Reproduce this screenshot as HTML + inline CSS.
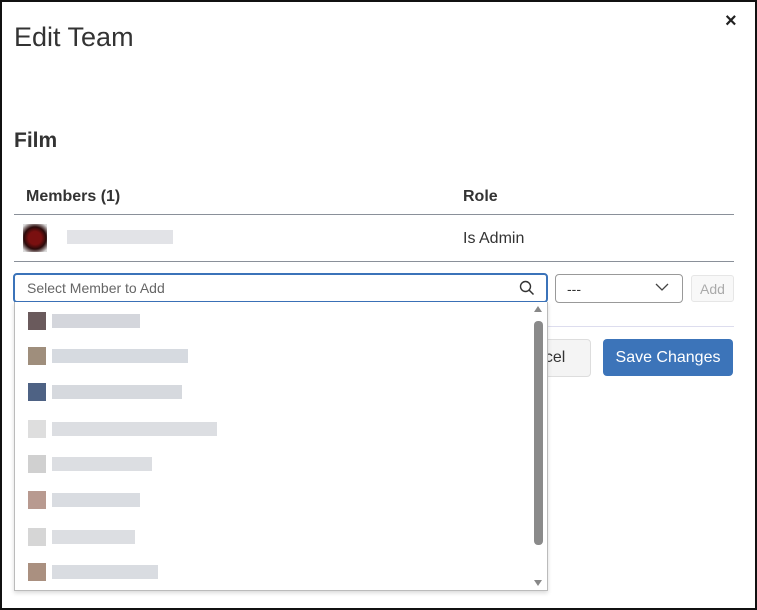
<!DOCTYPE html>
<html><head><style>
body{margin:0;width:757px;height:610px;overflow:hidden;background:#fff;font-family:"Liberation Sans",sans-serif;color:#222;position:relative}
.frame{position:absolute;left:0;top:0;width:753px;height:606px;border:2px solid #111}
.a{position:absolute}
.blk{position:absolute;height:14px}
.av{position:absolute;width:18px;height:18px}
</style></head><body>
<div class="frame"></div>
<div class="a" style="left:14px;top:22px;font-size:27px;color:#333">Edit Team</div>
<div class="a" style="left:725px;top:10px;font-size:20px;font-weight:bold;color:#222">×</div>
<div class="a" style="left:14px;top:129px;font-size:21px;font-weight:bold;color:#333">Film</div>
<div class="a" style="left:26px;top:188px;font-size:16px;font-weight:bold;color:#333">Members (1)</div>
<div class="a" style="left:463px;top:188px;font-size:16px;font-weight:bold;color:#333">Role</div>
<div class="a" style="left:14px;top:214px;width:720px;height:1px;background:#8a9099"></div>
<div class="a" style="left:23px;top:224px;width:24px;height:28px;background:radial-gradient(circle,#7a1010 35%,#2a0a0a 60%,#ddd 90%)"></div>
<div class="blk" style="left:67px;top:230px;width:106px;background:#e2e3e7"></div>
<div class="a" style="left:463px;top:230px;font-size:16px;color:#333">Is Admin</div>
<div class="a" style="left:14px;top:261px;width:720px;height:1px;background:#8a9099"></div>
<div class="a" style="left:14px;top:326px;width:720px;height:1px;background:#dde"></div>
<div class="a" style="left:13px;top:273px;width:531px;height:26px;border:2px solid #3b73b9;border-radius:4px;background:#fff"></div>
<div class="a" style="left:27px;top:280px;font-size:14px;color:#666">Select Member to Add</div>
<svg class="a" style="left:518px;top:279px" width="18" height="18" viewBox="0 0 18 18"><circle cx="7.5" cy="7.5" r="5" fill="none" stroke="#333" stroke-width="1.4"/><path d="M11 11l4.5 4.5" stroke="#333" stroke-width="1.5"/></svg>
<div class="a" style="left:555px;top:274px;width:126px;height:27px;border:1px solid #999;border-radius:4px"></div>
<div class="a" style="left:567px;top:281px;font-size:14px;color:#333">---</div>
<svg class="a" style="left:655px;top:282px" width="14" height="10"><path d="M1 2l6 6 6-6" fill="none" stroke="#444" stroke-width="1.3"/></svg>
<div class="a" style="left:691px;top:275px;width:41px;height:25px;border:1px solid #e6e6e6;border-radius:3px;background:#f8f8f8;color:#aaa;font-size:14px;line-height:26px;text-align:center">Add</div>
<div class="a" style="left:530px;top:339px;width:59px;height:36px;border:1px solid #ddd;border-radius:4px;background:#f4f4f4"></div>
<div class="a" style="left:536px;top:349px;font-size:16px;color:#333">ncel</div>
<div class="a" style="left:603px;top:339px;width:130px;height:37px;border-radius:4px;background:#3c74b9;color:#fff;font-size:16px;line-height:38px;text-align:center">Save Changes</div>
<div class="a" style="left:14px;top:302px;width:532px;height:288px;border:1px solid #bbb;border-top:none;background:#fff;box-shadow:0 2px 4px rgba(0,0,0,.15)"></div>
<div class="a" style="left:534px;top:321px;width:9px;height:224px;background:#8a8a8a;border-radius:4px"></div>
<div class="a" style="left:534px;top:306px;width:0;height:0;border-left:4.5px solid transparent;border-right:4.5px solid transparent;border-bottom:6px solid #888"></div>
<div class="a" style="left:534px;top:580px;width:0;height:0;border-left:4.5px solid transparent;border-right:4.5px solid transparent;border-top:6px solid #888"></div>
<div class="av" style="left:28px;top:312px;background:#6a5a5c"></div><div class="blk" style="left:52px;top:314px;width:88px;background:#d4d6dc"></div>
<div class="av" style="left:28px;top:347px;background:#9f8e7c"></div><div class="blk" style="left:52px;top:349px;width:136px;background:#d6dae0"></div>
<div class="av" style="left:28px;top:383px;background:#4e6284"></div><div class="blk" style="left:52px;top:385px;width:130px;background:#d6d9de"></div>
<div class="av" style="left:28px;top:420px;background:#dedede"></div><div class="blk" style="left:52px;top:422px;width:165px;background:#dcdee2"></div>
<div class="av" style="left:28px;top:455px;background:#d0d0d0"></div><div class="blk" style="left:52px;top:457px;width:100px;background:#dcdee2"></div>
<div class="av" style="left:28px;top:491px;background:#b89a90"></div><div class="blk" style="left:52px;top:493px;width:88px;background:#d9dce1"></div>
<div class="av" style="left:28px;top:528px;background:#d6d6d6"></div><div class="blk" style="left:52px;top:530px;width:83px;background:#dcdee2"></div>
<div class="av" style="left:28px;top:563px;background:#aa9080"></div><div class="blk" style="left:52px;top:565px;width:106px;background:#d9dce1"></div>
</body></html>
